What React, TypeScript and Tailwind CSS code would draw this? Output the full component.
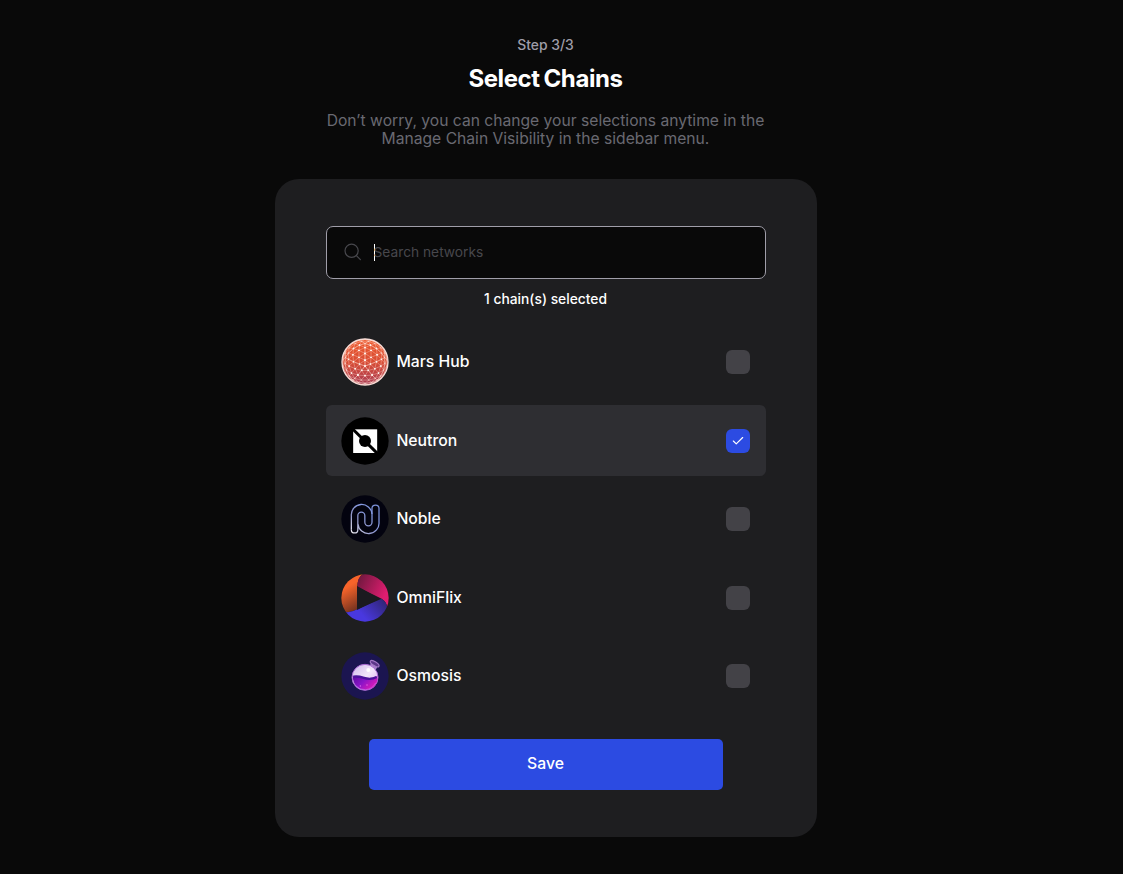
import React, { useState } from "react";
import { Check } from "lucide-react";

type Vec = [number, number, number];

const PHI = (1 + Math.sqrt(5)) / 2;
const corners: Vec[] = [-1, 1].flatMap((a) =>
  [-PHI, PHI].flatMap((b): Vec[] => [
    [0, a, b],
    [a, b, 0],
    [b, 0, a],
  ]),
);
const near = (a: Vec, b: Vec) => Math.hypot(a[0] - b[0], a[1] - b[1], a[2] - b[2]) < 2.1;

// Projects a point of the solid onto the front of a sphere of radius 69 centred at (90, 90).
function project(v: Vec): Vec {
  const n = Math.hypot(...v);
  const [x, y, z] = v.map((c) => c / n);
  const t = 0.38;
  const y2 = y * Math.cos(t) - z * Math.sin(t);
  const z2 = y * Math.sin(t) + z * Math.cos(t);
  return [90 + 69 * x, 90 + 69 * y2, z2];
}

function buildMesh() {
  const f = 4;
  const lines: [Vec, Vec][] = [];
  for (let i = 0; i < 12; i++)
    for (let j = i + 1; j < 12; j++)
      for (let k = j + 1; k < 12; k++) {
        const [a, b, c] = [corners[i], corners[j], corners[k]];
        if (!near(a, b) || !near(b, c) || !near(a, c)) continue;
        const at = (u: number, v: number) =>
          project([0, 1, 2].map((d) => (a[d] * (f - u - v) + b[d] * u + c[d] * v) / f) as Vec);
        for (let u = 0; u < f; u++)
          for (let v = 0; u + v < f; v++) {
            const [p, q, r] = [at(u, v), at(u + 1, v), at(u, v + 1)];
            lines.push([p, q], [q, r], [p, r]);
          }
      }
  return lines.filter(([p, q]) => p[2] > 0.05 && q[2] > 0.05);
}

const mesh = buildMesh();

function Mars() {
  return (
    <svg viewBox="18 18 144 144" className="size-full">
      <defs>
        <linearGradient id="mars" x1="0" y1="0" x2="0" y2="1">
          <stop offset="0" stopColor="#ee5a2c" />
          <stop offset="0.5" stopColor="#d94d35" />
          <stop offset="1" stopColor="#a93b54" />
        </linearGradient>
      </defs>
      <circle cx="90" cy="90" r="69" fill="url(#mars)" stroke="#f4dcd8" strokeWidth="4" />
      <g stroke="#fbd8cd" strokeWidth="1.300" strokeOpacity="0.85" strokeLinecap="round">
        {mesh.map(([a, b], i) => (
          <line key={i} x1={a[0]} y1={a[1]} x2={b[0]} y2={b[1]} />
        ))}
      </g>
      <g fill="#fff1ec">
        {mesh.filter(([a]) => a[2] > 0.6).map(([a], i) => (
          <circle key={i} cx={a[0]} cy={a[1]} r="2" />
        ))}
      </g>
    </svg>
  );
}

function Neutron() {
  return (
    <svg viewBox="18 19 144 144" className="size-full">
      <circle cx="90" cy="91" r="71" fill="#000" />
      <rect x="54.500" y="56" width="72" height="71" fill="#fff" />
      <path d="M53 55 L127 128" stroke="#000" strokeWidth="9" />
      <circle cx="90" cy="91" r="18" fill="#000" />
    </svg>
  );
}

function Noble() {
  return (
    <svg viewBox="18 17 144 144" className="size-full">
      <defs>
        <linearGradient id="noble" gradientUnits="userSpaceOnUse" x1="50" y1="130" x2="130" y2="50">
          <stop offset="0" stopColor="#f0eef5" />
          <stop offset="0.35" stopColor="#9298cc" />
          <stop offset="0.7" stopColor="#8499e2" />
          <stop offset="1" stopColor="#7a90d8" />
        </linearGradient>
      </defs>
      <circle cx="90" cy="89" r="71" fill="#03030f" />
      <g fill="none" stroke="url(#noble)" strokeWidth="3.800" strokeLinejoin="round">
        <path d="M49 121V79A31 31 0 0 1 111 74" />
        <path d="M49 121A9.750 9.750 0 0 0 68.500 121V79A10.500 10.500 0 0 1 89.500 79V99A10.750 10.750 0 0 0 111 99V57A10.500 9.500 0 0 1 132 57V99A31.500 31 0 0 1 69 104" />
      </g>
    </svg>
  );
}

function OmniFlix() {
  return (
    <svg viewBox="18 18 144 144" className="size-full">
      <defs>
        <linearGradient id="omniOrange" x1="0.2" y1="0" x2="0.6" y2="1">
          <stop offset="0.35" stopColor="#f8642a" />
          <stop offset="1" stopColor="#71311f" />
        </linearGradient>
        <linearGradient id="omniPink" x1="0" y1="0.2" x2="1" y2="0.7">
          <stop offset="0" stopColor="#72183f" />
          <stop offset="0.8" stopColor="#df1d70" />
        </linearGradient>
        <linearGradient id="omniBlue" x1="0" y1="0.7" x2="1" y2="0.2">
          <stop offset="0.35" stopColor="#4938df" />
          <stop offset="1" stopColor="#302575" />
        </linearGradient>
        <clipPath id="omniClip">
          <circle cx="90" cy="90" r="71" />
        </clipPath>
      </defs>
      <g clipPath="url(#omniClip)">
        <rect x="19" y="19" width="142" height="142" fill="#1b1a1f" />
        <path d="M84 18Q67 28 67 58V124Q45 136 28 131H10V18Z" fill="url(#omniOrange)" />
        <path d="M84 18Q67 28 67 56L140 92Q158 104 157 124L170 110V18Z" fill="url(#omniPink)" />
        <path d="M28 131Q45 136 67 124L140 92Q158 104 156 122L140 165H40Z" fill="url(#omniBlue)" />
        <path d="M66 54L133 92L66 126Z" fill="#1b1a1f" />
      </g>
    </svg>
  );
}

function Osmosis() {
  return (
    <svg viewBox="18 19 144 144" className="size-full">
      <defs>
        <linearGradient id="osmoLiquid" x1="0" y1="0" x2="1" y2="0.6">
          <stop offset="0" stopColor="#5a0d9d" />
          <stop offset="0.5" stopColor="#8b14c8" />
          <stop offset="1" stopColor="#e31bb5" />
        </linearGradient>
        <linearGradient id="osmoGlass" x1="0" y1="0" x2="1" y2="1">
          <stop offset="0" stopColor="#cdb8e9" />
          <stop offset="0.5" stopColor="#f3e6fb" />
          <stop offset="1" stopColor="#d69dec" />
        </linearGradient>
      </defs>
      <circle cx="90" cy="91" r="71" fill="#1b1550" />
      <path d="M103 61L111 49L128 62L122 73Z" fill="#a883cb" />
      <ellipse cx="119" cy="54" rx="15" ry="6" transform="rotate(32 119 54)" fill="#5b3588" stroke="#a377c6" strokeWidth="3.500" />
      <circle cx="90" cy="95" r="39" fill="url(#osmoGlass)" stroke="#a766d1" strokeWidth="3" />
      <path d="M53 92Q68 89 84 94Q108 102 127 91Q130 120 108 129Q83 139 64 122Q54 111 53 92Z" fill="url(#osmoLiquid)" />
      <path d="M55 93Q70 91 84 96Q107 104 125 94" fill="none" stroke="#4b139a" strokeWidth="7" />
      <path d="M61 119Q74 134 92 132Q113 130 122 112" fill="none" stroke="#bd70f0" strokeWidth="2" />
      <circle cx="100" cy="73" r="6" fill="#fff" />
      <circle cx="76" cy="121" r="2" fill="#e76cf2" />
      <circle cx="96" cy="118" r="2" fill="#f36be7" />
    </svg>
  );
}

const chains = [
  { name: "Mars Hub", Logo: Mars },
  { name: "Neutron", Logo: Neutron },
  { name: "Noble", Logo: Noble },
  { name: "OmniFlix", Logo: OmniFlix },
  { name: "Osmosis", Logo: Osmosis },
];

export default function App() {
  const [selected, setSelected] = useState<string[]>(["Neutron"]);
  const toggle = (name: string) =>
    setSelected((s) => (s.includes(name) ? s.filter((n) => n !== name) : [...s, name]));

  return (
    <main className="flex h-[874px] w-full flex-col items-center overflow-hidden bg-[#090909] pr-[32px] pt-9 font-['Inter',sans-serif] text-white">
      <p className="text-[13.9px] leading-[18px] font-medium text-[#9f9da8]">Step 3/3</p>
      <h1 className="mt-[11px] text-[24px] leading-7 font-bold tracking-[-0.4px] [word-spacing:-1.5px]">Select Chains</h1>
      <p className="mt-[19px] text-center text-[15.65px] leading-[18px] whitespace-nowrap text-[#696972]">
        Don’t worry, you can change your selections anytime in the
        <br />
        Manage Chain Visibility in the sidebar menu.
      </p>
      <section className="mt-[31px] flex h-[658px] w-[542px] shrink-0 flex-col items-center rounded-[24px] bg-[#1e1e20] pt-[47px]">
        <label className="flex h-[53px] w-[440px] shrink-0 items-center rounded-[7px] border border-[#a09ea9] bg-[#090909] pb-px pl-[17px]">
          <svg viewBox="0 0 18 18" className="size-[18px]" fill="none" stroke="#48484d" strokeWidth="1.2" strokeLinecap="round">
            <circle cx="7.6" cy="7.800" r="6.600" />
            <path d="M12.400 12.600L16.400 16.600" />
          </svg>
          <span className="ml-3 h-[17px] w-px bg-white" />
          <span className="-ml-px text-[13.75px] leading-5 text-[#47474c]">Search networks</span>
        </label>
        <p className="mt-[11px] text-[13.8px] leading-[18px] font-medium">{selected.length} chain(s) selected</p>
        <div className="mt-[18.700px] flex w-[440px] flex-col gap-2">
          {chains.map(({ name, Logo }) => {
            const on = selected.includes(name);
            return (
              <button
                key={name}
                onClick={() => toggle(name)}
                className={`flex h-[70.600px] shrink-0 items-center rounded-[6px] px-[15.500px] ${on ? "bg-[#2e2e32]" : ""}`}
              >
                <span className="size-[48px]">
                  <Logo />
                </span>
                <span className="ml-[7.400px] text-[15.750px] leading-6 font-medium">{name}</span>
                <span
                  className={`ml-auto flex size-[24px] items-center justify-center rounded-[6px] ${on ? "bg-[#2c4be2]" : "bg-[#434247]"}`}
                >
                  {on && <Check className="size-[14px]" strokeWidth={2} />}
                </span>
              </button>
            );
          })}
        </div>
        <button className="mt-[27px] h-[51px] w-[354px] shrink-0 rounded-[5px] bg-[#2c4be2] text-[15.750px] font-medium">Save</button>
      </section>
    </main>
  );
}
